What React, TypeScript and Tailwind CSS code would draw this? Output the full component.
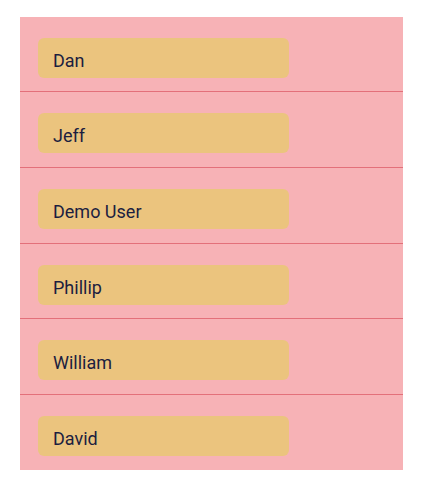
const users = ['Dan', 'Jeff', 'Demo User', 'Phillip', 'William', 'David'];
// bottom padding per row so separators land where the screenshot has them
const rowPad = ['pb-[13px]', 'pb-[14px]', 'pb-[14px]', 'pb-[13px]', 'pb-[14px]', 'pb-[14px]'];

export default function App() {
  return (
    <div className="min-h-[500px] bg-white pt-[17px] pl-5" style={{ fontFamily: 'Roboto, "Noto Sans", sans-serif' }}>
      <ul className="w-[383px] bg-[#f7b2b6]">
        {users.map((name, i) => (
          <li
            key={name}
            className={`pt-[21px] pl-[18px] ${rowPad[i]} ${i < users.length - 1 ? 'border-b border-[#e3707a]' : ''}`}
          >
            <div className="flex h-10 w-[251px] items-center rounded-md bg-[#ebc47e] pl-[15px] pt-[5px] text-[18px] text-[#1c1e40]">
              {name}
            </div>
          </li>
        ))}
      </ul>
    </div>
  );
}
